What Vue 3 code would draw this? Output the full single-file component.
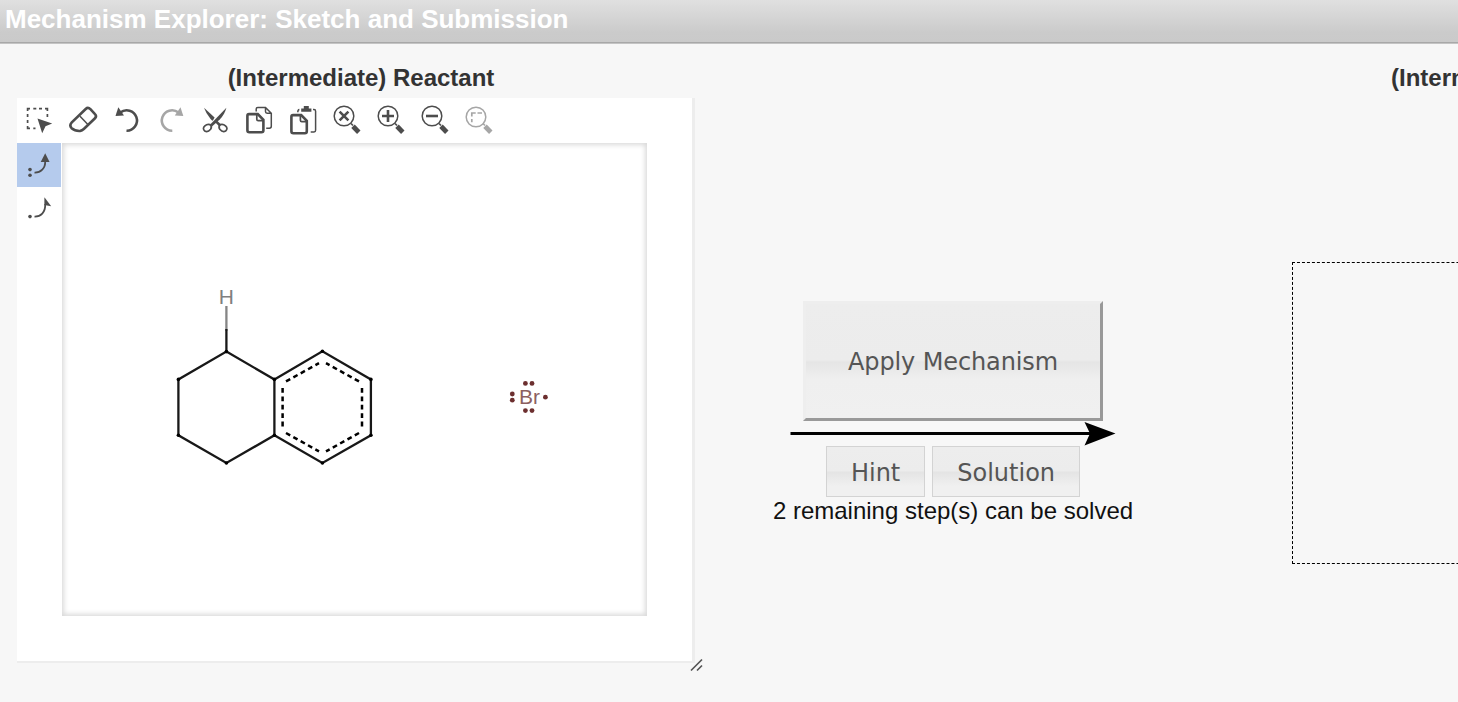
<template>
  <div class="page">
    <header class="title-bar">Mechanism Explorer: Sketch and Submission</header>

    <main class="workspace">
      <section class="reactant">
        <h2 class="heading">(Intermediate) Reactant</h2>

        <div class="editor">
          <div class="toolbar">
            <button
              v-for="tool in tools"
              :key="tool.name"
              class="tool"
              :class="{ disabled: tool.disabled }"
              :title="tool.name"
            >
              <svg viewBox="0 0 44 45" width="44" height="45">
                <template v-if="tool.lens">
                  <circle class="line thin" cx="19" :cy="tool.disabled ? 19 : 18" r="9.8" />
                  <path class="line handle" d="M28 28.3L33.8 34.2" />
                  <path class="line" d="M26 25.5L28 27.5" />
                </template>
                <path
                  v-for="(shape, i) in tool.shapes"
                  :key="i"
                  :class="shape.type"
                  :d="shape.d"
                />
              </svg>
            </button>
          </div>

          <div class="editor-body">
            <div class="side-tools">
              <button class="side-tool active" title="Electron pair flow">
                <svg viewBox="0 0 44 44" width="44" height="44">
                  <circle class="fill" cx="13" cy="26.6" r="1.8" />
                  <circle class="fill" cx="13" cy="32.3" r="1.8" />
                  <path class="line mid" d="M17.5 29.6C23.5 29.8 28.6 25.5 28.2 18" />
                  <path class="fill" d="M28.2 10.2L32.6 19H23.7Z" />
                </svg>
              </button>
              <button class="side-tool" title="Single electron flow">
                <svg viewBox="0 0 44 44" width="44" height="44">
                  <circle class="fill" cx="13" cy="29.6" r="1.8" />
                  <path class="line mid" d="M17.5 29.6C23.5 29.8 28.6 25.5 28.2 17" />
                  <path class="fill" d="M27.4 10.2L34.2 19.2L27.4 18Z" />
                </svg>
              </button>
            </div>

            <div class="canvas">
              <svg viewBox="62 143 585 473" width="585" height="473">
                <path class="bond faded" d="M226.4 306V331" />
                <path class="bond" d="M226.4 329V351.6" />
                <path
                  class="bond"
                  d="M226.4 351.6L274.4 379.4V435.3L226.4 463L178.4 435.3V379.4Z"
                />
                <path class="bond" d="M274.4 379.4L322.4 351.3L370.9 379.4V435.3L322.4 463L274.4 435.3" />
                <circle v-for="(c, i) in carbons" :key="i" :cx="c[0]" :cy="c[1]" r="1.8" />
                <path v-for="d in aromatic" :key="d" class="bond dashed" :d="d" />
                <text class="atom hydrogen" x="226.3" y="303.6">H</text>
                <text class="atom bromine" x="529.5" y="404.4">Br</text>
                <circle
                  v-for="(e, i) in electrons"
                  :key="i"
                  class="electron"
                  :cx="e[0]"
                  :cy="e[1]"
                  r="2.4"
                />
              </svg>
            </div>
          </div>

          <svg class="resize" viewBox="0 0 14 14" width="14" height="14">
            <path d="M1 12.5L12 1.5M7 12.5L12 7.5" />
          </svg>
        </div>
      </section>

      <section class="actions">
        <button class="btn apply">Apply Mechanism</button>
        <svg class="arrow" viewBox="0 0 326 25" width="326" height="25">
          <path class="shaft" d="M0.5 12.5H305" />
          <path d="M294.5 1L325.5 12.5L294.5 24.5L300 12.5Z" />
        </svg>
        <div class="btn-row">
          <button class="btn">Hint</button>
          <button class="btn">Solution</button>
        </div>
        <p class="remaining">{{ remaining }} remaining step(s) can be solved</p>
      </section>

      <section class="product">
        <h2 class="heading">(Intermediate) Product</h2>
        <div class="drop-area"></div>
      </section>
    </main>
  </div>
</template>

<script setup>
import { ref } from 'vue'

const remaining = ref(2)

const undoShapes = [
  { type: 'line bold', d: 'M15.3 14.6A10.2 10.2 0 1 1 21.5 32.7' },
  { type: 'fill', d: 'M13.3 9.2L10.5 18L19 17.4Z' },
]

const tools = [
  {
    name: 'Select',
    shapes: [
      {
        type: 'line',
        d: 'M10.6 13V10.6H13M16.3 10.6H19.3M22 10.6H25M28 10.6H30.4V13M30.4 16V19M10.6 16V19M10.6 22V25M10.6 28V30.4H13M16.3 30.4H18.5',
      },
      { type: 'fill', d: 'M20.5 20.5L35.2 25.4L28.5 28.3L25.2 35.2Z' },
    ],
  },
  {
    name: 'Erase',
    shapes: [
      {
        type: 'line bold',
        d: 'M24.7 11L10.8 24.4Q8 27.4 10.6 30.2Q14 33.2 19.2 32.9Q21 32.7 22.8 31L34 20.3Q36 18.2 34 16.2L29.4 11.2Q27 8.8 24.7 11Z',
      },
      { type: 'line thin', d: 'M19 18.2L27.6 27.2' },
    ],
  },
  { name: 'Undo', shapes: undoShapes },
  {
    name: 'Redo',
    disabled: true,
    shapes: [
      { type: 'line bold', d: 'M29.5 14.6A10.2 10.2 0 1 0 23.3 32.7' },
      { type: 'fill', d: 'M31.5 9.2L34.3 18L25.8 17.4Z' },
    ],
  },
  {
    name: 'Cut',
    shapes: [
      { type: 'fill', d: 'M11 9.8L21.6 19.4L19.8 22.8Q18.8 22.4 17.6 21Q13 15.5 11 9.8Z' },
      { type: 'fill', d: 'M33.4 9.8Q31.6 16.5 27 21.2L19 28.6L17.2 26.6Z' },
      { type: 'line bold', d: 'M22.5 22.8L27.2 27.5' },
      { type: 'line', d: 'M17 26.6Q19.4 28.6 17.6 31.2Q14.8 34.6 11.8 33Q9 30.6 11.9 27.9Q14.2 25.7 17 26.6Z' },
      { type: 'line', d: 'M27.4 26.6Q25 28.6 26.8 31.2Q29.6 34.6 32.6 33Q35.4 30.6 32.5 27.9Q30.2 25.7 27.4 26.6Z' },
    ],
  },
  {
    name: 'Copy',
    shapes: [
      { type: 'line bold', d: 'M12 16.1H20.8L26.4 21.8V32.3Q26.4 34.2 24.5 34.2H12.4Q10.4 34.2 10.4 32.3V17.8Q10.4 16.1 12 16.1Z' },
      { type: 'line', d: 'M19.8 16V21.2Q19.8 22.6 21.2 22.6H26.4' },
      { type: 'line thin', d: 'M19.2 13.5V11Q19.2 9.4 20.8 9.4H28.5L34.3 15.2V28.3Q34.3 30.2 32.4 30.2H29.2M28.5 9.4V13.6Q28.5 15.2 30.1 15.2H34.3' },
    ],
  },
  {
    name: 'Paste',
    shapes: [
      { type: 'line bold', d: 'M12 17.1H20.2L25.8 22.8V33.3Q25.8 35.2 23.9 35.2H12.4Q10.4 35.2 10.4 33.3V18.8Q10.4 17.1 12 17.1Z' },
      { type: 'line', d: 'M19.4 17V22.2Q19.4 23.6 20.8 23.6H25.8' },
      { type: 'fill', d: 'M20.2 10.4H22.8V8H27.8V10.4H30.4V13.8H20.2Z' },
      { type: 'line thin', d: 'M32 11.6H33Q34.6 11.6 34.6 13.2V32.3Q34.6 34 33 34H29.7M16.8 14.2Q16.8 11.8 18.4 11.6' },
    ],
  },
  {
    name: 'Zoom to fit',
    lens: true,
    shapes: [{ type: 'line bold', d: 'M14.6 13.6L23.4 22.4M23.4 13.6L14.6 22.4' }],
  },
  {
    name: 'Zoom in',
    lens: true,
    shapes: [{ type: 'line bold', d: 'M19 12V24M13 18H25' }],
  },
  {
    name: 'Zoom out',
    lens: true,
    shapes: [{ type: 'line bold', d: 'M13 18H25' }],
  },
  {
    name: 'Zoom to selection',
    lens: true,
    disabled: true,
    shapes: [{ type: 'line', d: 'M18.7 15H14.8V18.5M20.5 15H25M14.8 21V24.3' }],
  },
]

// ring atoms, drawn as rounded joints
const carbons = [
  [226.4, 351.6],
  [274.4, 379.4],
  [274.4, 435.3],
  [226.4, 463],
  [178.4, 435.3],
  [178.4, 379.4],
  [322.4, 351.3],
  [370.9, 379.4],
  [370.9, 435.3],
  [322.4, 463],
]

const aromatic = [
  'M282.6 388V427',
  'M362 388V427',
  'M286 381.4L319 363.2',
  'M359 381.4L326 363.2',
  'M286 433L319 451.4',
  'M359 433L326 451.4',
]

const electrons = [
  [525.4, 383.4],
  [532, 383.4],
  [525.4, 410.6],
  [532, 410.6],
  [512.3, 394],
  [512.3, 400.2],
  [545.4, 397.2],
]
</script>

<style>
body {
  background: #f7f7f7;
}
</style>

<style scoped>
.page {
  height: 702px;
  overflow: hidden;
  background: #f7f7f7;
  font-family: 'Liberation Sans', Arial, sans-serif;
}

.title-bar {
  box-sizing: border-box;
  height: 44px;
  padding: 3px 5px 0;
  background: linear-gradient(#e0e0e0, #cbcbcb 75%, #cacaca);
  border-bottom: 1px solid #c4c4c4;
  box-shadow: inset 0 -1px #a8a8a8;
  color: #fff;
  font-size: 26px;
  font-weight: bold;
  line-height: 32px;
}

.workspace {
  display: flex;
  width: 1840px;
  padding-left: 17px;
}

.reactant {
  width: 688px;
}

.heading {
  margin: 0;
  padding-top: 19px;
  height: 35px;
  color: #333;
  font-size: 24px;
  font-weight: bold;
  line-height: 30px;
  text-align: center;
}

.editor {
  position: relative;
  box-sizing: border-box;
  width: 678px;
  height: 565px;
  background: #fff;
  border-right: 3px solid #ededed;
  border-bottom: 2px solid #ededed;
}

.toolbar {
  display: flex;
  height: 45px;
}

.tool,
.side-tool {
  display: block;
  width: 44px;
  padding: 0;
  border: 0;
  background: none;
  color: #4d4d4d;
}

.tool svg,
.side-tool svg,
.canvas svg {
  display: block;
}

.tool.disabled {
  color: #a6a6a6;
}

.side-tool {
  height: 44px;
}

.side-tool.active {
  background: #b5cbed;
}

.fill {
  fill: currentColor;
}

.line {
  fill: none;
  stroke: currentColor;
  stroke-width: 1.7;
}

.thin {
  stroke-width: 1.5;
}

.mid {
  stroke-width: 1.8;
}

.bold {
  stroke-width: 2.6;
}

.handle {
  stroke-width: 4.8;
}

.editor-body {
  display: flex;
  gap: 1px;
}

.canvas {
  width: 585px;
  height: 473px;
  box-shadow: inset 0 0 5px 2px #dadada;
}

.bond {
  fill: none;
  stroke: #181818;
  stroke-width: 2.3;
}

.bond.faded {
  stroke: #858585;
}

.bond.dashed {
  stroke: #000;
  stroke-width: 2.5;
  stroke-dasharray: 4.8 3.6;
}

.atom {
  font-family: 'Liberation Sans', Arial, sans-serif;
  font-size: 21px;
  text-anchor: middle;
}

.hydrogen {
  fill: #808080;
}

.bromine {
  fill: #8c6060;
}

.electron {
  fill: #6c2f2f;
}

.resize {
  position: absolute;
  right: -12px;
  bottom: -11px;
}

.resize path {
  stroke: #555;
  stroke-width: 1.7;
}

.actions {
  display: flex;
  flex-direction: column;
  align-items: center;
  width: 496px;
  padding-top: 257px;
}

.btn {
  box-sizing: border-box;
  height: 51px;
  padding: 2px 24px 0;
  border: 1px solid #d3d3d3;
  background: linear-gradient(#ededed, #ececec 49%, #e4e4e4 51%, #f0f0f0 80%);
  color: #555;
  font-family: 'DejaVu Sans', Verdana, sans-serif;
  font-size: 24px;
}

.apply {
  width: 300px;
  height: 120px;
  padding: 2px 0 0;
  border: 3px solid;
  border-color: #eee #999 #999 #eee;
  background: linear-gradient(#ededed, #ececec 49%, #e5e5e5 51%, #efefef 66%, #f0f0f0);
  letter-spacing: -0.12px;
}

.arrow {
  display: block;
}

.arrow .shaft {
  stroke: #000;
  stroke-width: 3;
}

.btn-row {
  display: flex;
  gap: 7px;
}

.remaining {
  margin: 0;
  color: #111;
  font-size: 24px;
  line-height: 28px;
}

.product {
  width: 636px;
}

.drop-area {
  box-sizing: border-box;
  width: 302px;
  height: 302px;
  margin: 164px 0 0 91px;
  border: 1px dashed #000;
}
</style>
